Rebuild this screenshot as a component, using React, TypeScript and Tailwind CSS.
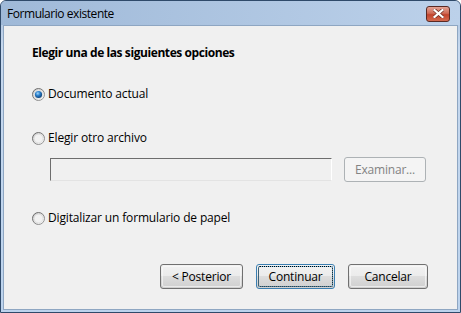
import React from "react";

const FONT = { fontFamily: '"Open Sans", "Noto Sans", sans-serif' };

function Radio({ checked }: { checked?: boolean }) {
  return (
    <svg width="13" height="13" viewBox="0 0 13 13" className="shrink-0">
      <defs>
        <linearGradient id="rg-out" x1="0" y1="0" x2="1" y2="1">
          <stop offset="0" stopColor="#5f5f5f" />
          <stop offset="1" stopColor="#a0a0a0" />
        </linearGradient>
        <linearGradient id="rg-in" x1="0" y1="0" x2="1" y2="1">
          <stop offset="0" stopColor="#c8c8c8" />
          <stop offset="1" stopColor="#fbfbfb" />
        </linearGradient>
        <radialGradient id="rg-dot" cx="0.4" cy="0.35" r="0.7">
          <stop offset="0" stopColor="#9fd6fb" />
          <stop offset="0.45" stopColor="#2a7fcb" />
          <stop offset="1" stopColor="#0b3a6e" />
        </radialGradient>
      </defs>
      <circle cx="6.5" cy="6.5" r="6" fill="url(#rg-in)" stroke="url(#rg-out)" strokeWidth="1" />
      <circle cx="6.5" cy="6.5" r="4.3" fill="#f2f2f2" stroke="#dcdcdc" strokeWidth="0.6" />
      {checked && <circle cx="6.5" cy="6.5" r="3.6" fill="url(#rg-dot)" />}
    </svg>
  );
}

function Btn({
  label,
  w,
  def,
  disabled,
}: {
  label: string;
  w: string;
  def?: boolean;
  disabled?: boolean;
}) {
  if (disabled) {
    return (
      <div
        className={`${w} h-[25px] rounded-[3px] border border-[#adb2b5] bg-[#f4f4f4] flex items-center justify-center text-[12px] tracking-[-0.2px] text-[#838383]`}
      >
        {label}
      </div>
    );
  }
  return (
    <div
      className={`${w} h-[25px] rounded-[3px] border ${
        def ? "border-[#3c7fb1]" : "border-[#707070]"
      } p-[1px] bg-[linear-gradient(to_bottom,#f2f2f2_0%,#ebebeb_50%,#dddddd_50%,#cfcfcf_100%)]`}
    >
      <div
        className={`w-full h-full rounded-[2px] flex items-center justify-center text-[12px] tracking-[-0.2px] text-black ${
          def ? "outline-1 outline-dotted outline-black -outline-offset-1 border border-[#7fc4eb]" : "border border-[#fcfcfc]/60"
        }`}
      >
        {label}
      </div>
    </div>
  );
}

export default function App() {
  return (
    <div className="w-[461px] h-[313px] bg-white" style={FONT}>
      <div className="w-full h-full flex flex-col rounded-t-[6px] border border-[#2f4a6a] bg-[linear-gradient(to_bottom,#a7bfdc,#c6d8ee_15%,#bcd3ed)]">
        {/* Title bar */}
        <div className="h-[24px] flex items-center justify-between pl-[6px] pr-[10px] shrink-0 bg-[linear-gradient(to_right,#9fb9d8,#bcd1ea)] rounded-t-[5px]">
          <span className="text-[12px] tracking-[-0.45px] text-black leading-[16px] mt-[1px]">Formulario existente</span>
          <div className="w-[24px] h-[16px] mt-[1px] rounded-[3px] border border-[#5a2a24] bg-[linear-gradient(to_bottom,#e4a496,#cf6a56_45%,#c2432d_55%,#d36a4f)] flex items-center justify-center">
            <svg width="11" height="9" viewBox="0 0 11 9">
              <path d="M1.5 1 L9.5 8 M9.5 1 L1.5 8" stroke="#6b2a22" strokeWidth="3.6" strokeLinecap="square" />
              <path d="M1.5 1 L9.5 8 M9.5 1 L1.5 8" stroke="#ffffff" strokeWidth="2.2" strokeLinecap="square" />
            </svg>
          </div>
        </div>
        {/* Body */}
        <div className="flex-1 mx-[2px] mb-[2px] border border-[#8ea6c2] bg-[#f0f0f0] flex flex-col pl-[28px] pr-[29px] text-[12px] tracking-[-0.15px] text-black">
          <div className="mt-[19px] h-[16px] leading-[16px] font-bold tracking-[-0.42px]">Elegir una de las siguientes opciones</div>

          <div className="mt-[25px] h-[16px] flex items-center">
            <Radio checked />
            <span className="ml-[3px] leading-[16px]">Documento actual</span>
          </div>

          <div className="mt-[28px] h-[16px] flex items-center">
            <Radio />
            <span className="ml-[3px] leading-[16px]">Elegir otro archivo</span>
          </div>

          <div className="mt-[11px] flex items-center pl-[18px]">
            <div className="w-[282px] h-[23px] border-t border-l border-t-[#6d6d6d] border-l-[#6d6d6d] border-r border-b border-r-[#ffffff] border-b-[#e3e3e3] bg-[#f0f0f0]" />
            <div className="ml-[12px]">
              <Btn label="Examinar..." w="w-[82px]" disabled />
            </div>
          </div>

          <div className="mt-[28px] h-[16px] flex items-center">
            <Radio />
            <span className="ml-[3px] leading-[16px]">Digitalizar un formulario de papel</span>
          </div>

          <div className="mt-[38px] flex justify-end gap-[13px]">
            <Btn label="< Posterior" w="w-[83px]" />
            <Btn label="Continuar" w="w-[79px]" def />
            <Btn label="Cancelar" w="w-[80px]" />
          </div>
        </div>
      </div>
    </div>
  );
}
